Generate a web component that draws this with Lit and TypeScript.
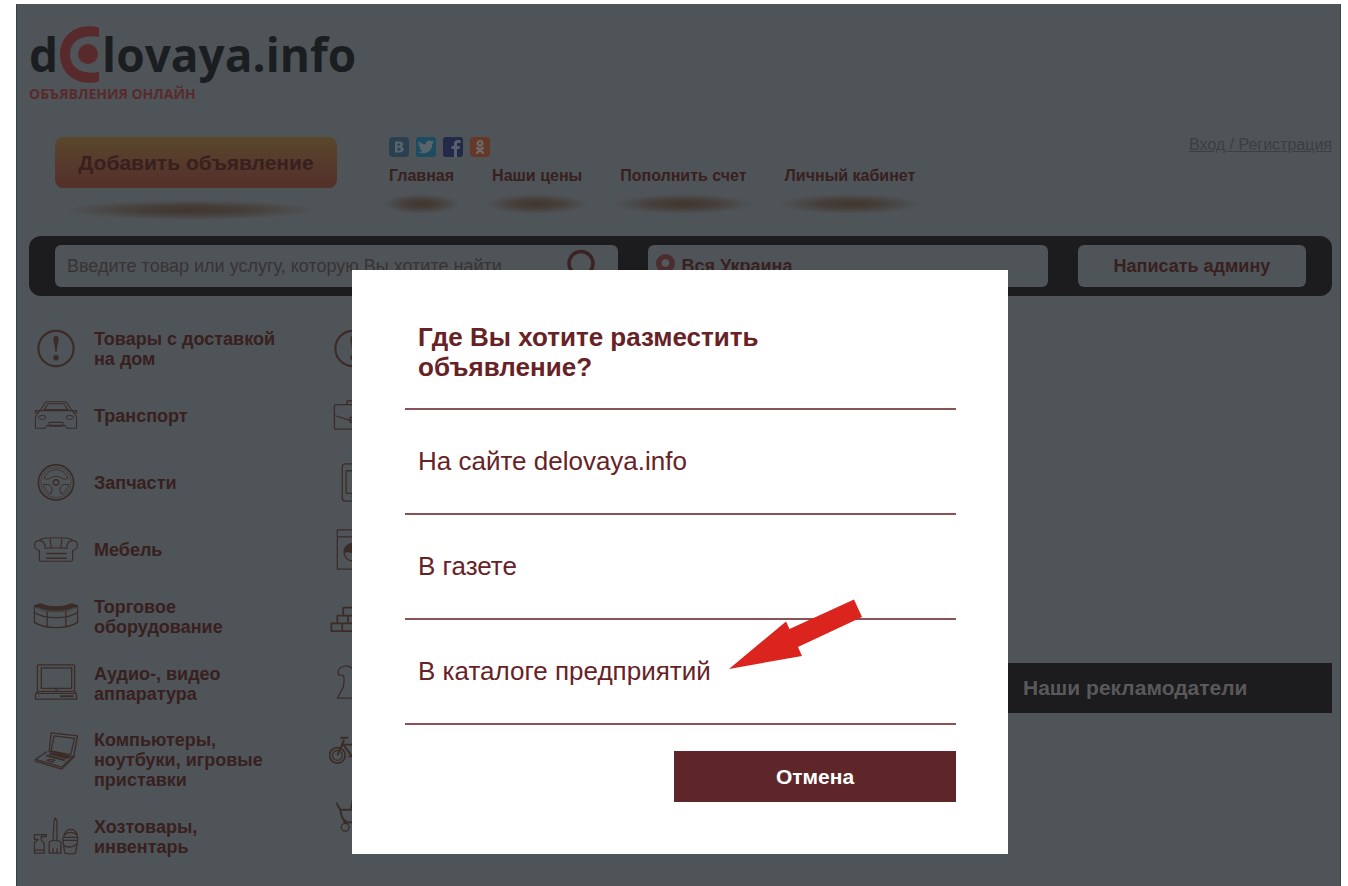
import { LitElement, html, css, svg, nothing } from "lit";
import { customElement, state } from "lit/decorators.js";

const icons: Record<string, unknown> = {
  alert: svg`<circle cx="24" cy="24" r="18" stroke-width="2.2"/><path d="M21.3 13.5c0-3 5.400-3 5.400 0 0 4-1.700 7-2 14h-1.400c-.3-7-2-10-2-14z" fill="currentColor" stroke="none"/><circle cx="24" cy="33.500" r="2.800" fill="currentColor" stroke="none"/>`,
  car: svg`<path d="M8 19l4-7c1-1.500 2-2 4-2h16c2 0 3 .5 4 2l4 7M12 18l3-5c.5-1 1-1 2-1h14c1 0 1.500 0 2 1l3 5zM8 19H3v2l3 1M40 19h5v2l-3 1M8 19h32c3 2 5 5 5 9v9H35l-2-3H15l-2 3H3v-9c0-4 2-7 5-9zM17 31h14v4H17z" stroke-width="1.100"/><ellipse cx="10" cy="26" rx="4" ry="2" stroke-width="1"/><ellipse cx="38" cy="26" rx="4" ry="2" stroke-width="1"/>`,
  wheel: svg`<circle cx="24" cy="24" r="18" stroke-width="1.800"/><circle cx="24" cy="24" r="15.500" stroke-width=".6"/><circle cx="24" cy="24" r="2.800"/><path d="M12 20c3-12 21-12 24 0-3 1-5 .5-7-1-3-2-7-2-10 0-2 1.500-4 2-7 1zM11 26h5c3 1 4 3 4 5l-1 5c-4-2-7-5-8-10zM37 26h-5c-3 1-4 3-4 5l1 5c4-2 7-5 8-10z" stroke-width="1"/>`,
  sofa: svg`<path d="M7 25c-7-2-6-10 0-10 2-3 8-3 17-3s15 0 17 3c6 0 7 8 0 10v9c0 2-1 2-2 2H9c-2 0-2-1-2-2zM7 15c4 0 6 3 6 8 5-1 17-1 22 0 0-5 2-8 6-8M18 13l1 9M30 13l-1 9" stroke-width="1.200"/><path d="M14 28h21M14 33h21" stroke-width="1.600"/>`,
  counter: svg`<path d="M2 13l6-2c8 4 24 4 32 0l6 2c-10 8-34 8-44 0z" fill="currentColor"/><path d="M2 13v17c10 7 34 7 44 0V13M15 18v17M34 18v17M2 20c10 7 34 7 44 0"/><path d="M5 15c10 5 28 5 38 0" stroke="#4f5458" stroke-width=".8"/>`,
  monitor: svg`<rect x="5" y="5" width="38" height="27" rx="1"/><rect x="9" y="8" width="31" height="21"/><path d="M5 32l-2 3v5h42v-5l-2-3M3 34h42"/><path d="M28 37h14" stroke-width="2"/><path d="M6 37h1M23 30.500h3"/>`,
  laptop: svg`<path d="M19 6l27 3-4 22-25-6zM22 9l21 2.500-4 17-20-4z"/><path d="M15 25L3 33l27 8 12-12M3 33v2l27 8 13-13"/><path d="M17 27l19 5M14 29l19 5M21 26l17 5" stroke-width="2"/><path d="M15 34l5 2 3-2-5-1z"/>`,
  household: svg`<path d="M2 22h12v2H9v4l3 3v10H2V30l4-3h-4zM2 38h10M21 28l1-20 1-3 2 3v20M17 31c0-2 2-3 6-3s6 1 6 3v10H17zM21 41v-5M25 41v-5M32 25c0-11 14-11 14 0M31 25h15v3H31zM31 28l2 13c2 1 9 1 11 0l2-13M33 22c3-3 9-3 12 0M32 33c4 3 9 2 13-1"/>`,
  briefcase: svg`<rect x="5" y="13" width="38" height="25" rx="2"/><path d="M18 13v-4h12v4M5 24l16 5h6l16-5M21 26h6v5h-6z"/>`,
  phone: svg`<rect x="13" y="5" width="24" height="38" rx="3"/><path d="M17 12h16v23H17zM22 38h5"/>`,
  washer: svg`<path d="M8 4h32v40H8zM8 11h32"/><circle cx="24" cy="27" r="9"/><path d="M15 27c5-3 12 3 18 0 0-12-18-12-18 0z" fill="currentColor"/>`,
  bricks: svg`<path d="M2 31h44v8H2zM8 23h32v8H8zM14 15h20v8H14zM13 31v8M26 31v8M19 23v8M29 23v8M24 15v8" stroke-width="1.800"/>`,
  chess: svg`<path d="M9 11c2-5 8-6 12-4 7 4 8 16 6 22l5 6v4H8l6-11c1-6 2-9 0-12l-5-1z"/>`,
  bike: svg`<circle cx="8" cy="29" r="8" stroke-width="1.800"/><circle cx="8" cy="29" r="5"/><circle cx="40" cy="29" r="8"/><path d="M8 29l7-16M11 11h8M14 18h18L23 30zM14 18l9 12h-4M31 18l9 11M27 12h8" stroke-width="2"/>`,
  pram: svg`<path d="M7 9l4 7M11 16h22c0 9-5 13-13 13-5 0-8-5-9-13M22 16L24 4M14 27l3 3M28 27l5 5" stroke-width="2"/><circle cx="16" cy="34" r="4"/><circle cx="34" cy="34" r="4"/>`,
};

const categories: { icon: string; label: string }[] = [
  { icon: "alert", label: "Товары с доставкой на дом" },
  { icon: "car", label: "Транспорт" },
  { icon: "wheel", label: "Запчасти" },
  { icon: "sofa", label: "Мебель" },
  { icon: "counter", label: "Торговое оборудование" },
  { icon: "monitor", label: "Аудио-, видео аппаратура" },
  { icon: "laptop", label: "Компьютеры, ноутбуки, игровые приставки" },
  { icon: "household", label: "Хозтовары, инвентарь" },
];

const moreCategories = ["alert", "briefcase", "phone", "washer", "bricks", "chess", "bike", "pram"];

const menu = ["Главная", "Наши цены", "Пополнить счет", "Личный кабинет"];

const places = ["На сайте delovaya.info", "В газете", "В каталоге предприятий"];

@customElement("app-root")
export class AppRoot extends LitElement {
  @state() private open = true;

  static styles = css`
    :host {
      display: block;
      padding: 4px 7px 0 16px;
      background: #fff;
      font-family: "Liberation Sans", Arial, sans-serif;
      color: #38201f;
    }
    * {
      box-sizing: border-box;
    }
    a {
      color: inherit;
      text-decoration: none;
    }
    button,
    input,
    select {
      font: inherit;
      color: inherit;
      border: 0;
      margin: 0;
      background: none;
      outline: none;
    }
    button {
      cursor: pointer;
      padding: 0;
    }
    .page {
      position: relative;
      min-height: calc(100vh - 4px);
      background: #4f5458;
      border-left: 1px solid #2b444d;
      border-right: 1px solid #3e4448;
      padding: 20px 8px 0 12px;
    }
    .logo {
      display: block;
      width: max-content;
      font-family: "Open Sans", "Noto Sans", sans-serif;
      font-weight: 700;
    }
    .wordmark {
      display: flex;
      align-items: center;
      gap: 2px;
      height: 60px;
      font-size: 46px;
      line-height: 60px;
      color: #1b1e20;
    }
    .tagline {
      display: block;
      font-size: 14px;
      line-height: 20px;
      color: #592a2c;
    }
    .header {
      display: flex;
      align-items: flex-start;
      margin-top: 33px;
      padding-left: 26px;
      height: 99px;
    }
    .add {
      width: 282px;
      margin-right: 52px;
    }
    .add-button {
      width: 100%;
      height: 51px;
      border-radius: 8px;
      background: linear-gradient(#59482c, #573a2c 50%, #54302b);
      font-size: 21px;
      font-weight: 700;
    }
    .glow {
      display: block;
      height: 20px;
      background: radial-gradient(closest-side, #41372f, #453d38 40%, transparent);
    }
    .add .glow {
      margin: 12px 20px 0 10px;
    }
    .social {
      display: flex;
      gap: 7px;
      height: 20px;
    }
    .social svg {
      display: block;
    }
    .menu {
      display: flex;
      gap: 38px;
      margin-top: 9px;
      font-size: 16px;
      line-height: 20px;
      font-weight: 700;
    }
    .menu .glow {
      margin: 8px -6px 0;
    }
    .menu a {
      display: block;
    }
    .login {
      margin-left: auto;
      font-size: 16px;
      line-height: 16px;
      color: #3a3f43;
      text-decoration: underline;
    }
    .bar {
      display: grid;
      grid-template-columns: 563fr 399fr 228fr;
      gap: 30px;
      padding: 9px 26px;
      border-radius: 12px;
      background: #1c1b1d;
      font-size: 18px;
    }
    .field {
      display: flex;
      align-items: center;
      height: 42px;
      min-width: 0;
      border-radius: 6px;
      background: #4f5458;
    }
    .field input {
      flex: 1;
      min-width: 0;
      height: 42px;
      padding: 0 0 0 12px;
    }
    .field input::placeholder {
      color: #373335;
      opacity: 1;
    }
    .find {
      padding-right: 20px;
      color: #3a2322;
    }
    .find svg,
    .pin {
      display: block;
    }
    .pin {
      margin: 0 6px 0 8px;
    }
    .field select {
      flex: 1;
      appearance: none;
      font-weight: 700;
      height: 42px;
      padding: 0;
    }
    .write {
      justify-content: center;
      font-weight: 700;
    }
    .content {
      display: grid;
      grid-template-columns: 297px 1fr 324px;
      padding-top: 29px;
    }
    .list {
      display: flex;
      flex-direction: column;
      gap: 20px;
      margin: 0;
      padding: 0 0 24px 3px;
      list-style: none;
    }
    .item {
      display: flex;
      gap: 14px;
      min-height: 47px;
      font-size: 18px;
      line-height: 20px;
      font-weight: 700;
    }
    .item span {
      align-self: center;
      width: 190px;
      padding: 3px 0;
    }
    .icon {
      display: block;
      flex: none;
      color: #3b2c28;
    }
    .partners {
      padding-top: 338px;
    }
    .partners h2 {
      margin: 0;
      padding: 0 15px;
      background: #1c1b1d;
      color: #59585b;
      font-size: 21px;
      line-height: 50px;
    }
    .overlay {
      position: absolute;
      inset: 0;
      display: flex;
      justify-content: center;
      align-items: flex-start;
      padding: 266px 0 0 3px;
    }
    .dialog {
      width: 656px;
      max-width: 100%;
      padding: 52px 52px 52px 53px;
      background: #fff;
      color: #672226;
      font-size: 26px;
      line-height: 30px;
    }
    .dialog h1 {
      margin: 0;
      padding: 0 140px 26px 13px;
      border-bottom: 2px solid #8a5254;
      font-size: inherit;
    }
    .place {
      position: relative;
      display: block;
      width: 100%;
      height: 105px;
      padding: 0 0 2px 13px;
      border-bottom: 2px solid #8a5254;
      text-align: left;
    }
    .arrow {
      position: absolute;
      left: 324px;
      top: -21px;
    }
    .cancel {
      display: block;
      width: 282px;
      height: 51px;
      margin: 26px 0 0 auto;
      background: #5e2628;
      color: #fff;
      font-size: 21px;
      font-weight: 700;
    }
  `;

  private icon(name: string) {
    return html`<svg class="icon" width="48" height="47" viewBox="0 0 48 48" fill="none" stroke="currentColor" stroke-width="1.300" stroke-linejoin="round" aria-hidden="true">${icons[name]}</svg>`;
  }

  private close() {
    this.open = false;
  }

  private renderSocial() {
    return html`<div class="social">
      <a href="#" aria-label="ВКонтакте"><svg width="20" height="20" viewBox="0 0 20 20"><rect width="20" height="20" rx="4" fill="#2a4050"/><path d="M6 4.500h4.500c4.500 0 4.500 4 1.800 5 3.700 1 3.200 6-1.800 6H6zM8.500 6.500v2.200h1.300c2 0 2-2.200 0-2.200zM8.500 10.700v2.800h1.500c2.200 0 2.200-2.800 0-2.800z" fill="#5a646b" fill-rule="evenodd"/></svg></a>
      <a href="#" aria-label="Twitter"><svg width="20" height="20" viewBox="0 0 20 20"><rect width="20" height="20" rx="3" fill="#1c4c62"/><path d="M2.500 4c2 2.300 4.500 3.300 7.300 3.500C9.300 4.500 13 2 15.500 4.300l2.300-.8-1.300 2 1.500-.3-1.700 1.900C16.500 14.500 9 18.500 2 15c2 0 3.500-.3 4.800-1.400C5 13.300 4 12.400 3.600 11h1.500C3.500 10.300 2.500 9 2.500 7.300L4 7.700C2.500 6.500 2 5.500 2.500 4z" fill="#5a646b"/></svg></a>
      <a href="#" aria-label="Facebook"><svg width="20" height="20" viewBox="0 0 20 20"><rect width="20" height="20" rx="3" fill="#232a49"/><path d="M11 20v-8H8.500V9H11V7c0-3 1.500-4 4-4h2.500v3h-2C14 6 14 6.500 14 7.500V9h3l-.5 3H14v8z" fill="#5a606b"/></svg></a>
      <a href="#" aria-label="Одноклассники"><svg width="20" height="20" viewBox="0 0 20 20"><rect x=".5" y=".5" width="19" height="19" rx="3" fill="#633a2a" stroke="#6b3326"/><g fill="none" stroke="#6f6a66" stroke-width="2.200" stroke-linecap="round"><circle cx="10" cy="6.300" r="2.300"/><path d="M7 11c2 1.300 4 1.300 6 0M10 12.500L7 16M10 12.500l3 3.500"/></g></svg></a>
    </div>`;
  }

  private renderDialog() {
    return html`<div class="overlay">
      <section class="dialog" role="dialog" aria-labelledby="question">
        <h1 id="question">Где Вы хотите разместить объявление?</h1>
        ${places.map(
          (place, i) => html`<button class="place" @click=${this.close}>
            ${place}
            ${i === places.length - 1
              ? html`<svg class="arrow" width="134" height="71" viewBox="0 0 134 71" aria-hidden="true"><path d="M0 70L57 22.500 60.500 30 125 .5 133 18 69 48 73 57z" fill="#db241d"/></svg>`
              : nothing}
          </button>`
        )}
        <button class="cancel" @click=${this.close}>Отмена</button>
      </section>
    </div>`;
  }

  render() {
    return html`<div class="page">
      <a class="logo" href="#">
        <span class="wordmark">
          <span>d</span>
          <svg width="40" height="57" viewBox="0 0 40 57" aria-hidden="true"><path d="M39 1.500C16-4 0 10 0 28.500S16 61 39 55.500V46C22 49 10 42 10 28.500S22 8 39 11z" fill="#592a2c"/><circle cx="28" cy="28" r="10" fill="#592a2c"/></svg>
          <span>lovaya.info</span>
        </span>
        <span class="tagline">ОБЪЯВЛЕНИЯ ОНЛАЙН</span>
      </a>

      <header class="header">
        <div class="add">
          <button class="add-button">Добавить объявление</button>
          <span class="glow"></span>
        </div>
        <div>
          ${this.renderSocial()}
          <nav class="menu">
            ${menu.map((entry) => html`<a href="#">${entry}<span class="glow"></span></a>`)}
          </nav>
        </div>
        <a class="login" href="#">Вход / Регистрация</a>
      </header>

      <form class="bar" @submit=${(e: Event) => e.preventDefault()}>
        <div class="field">
          <input type="text" aria-label="Поиск" placeholder="Введите товар или услугу, которую Вы хотите найти" />
          <button class="find" aria-label="Найти"><svg width="32" height="36" viewBox="0 0 32 36" fill="none" stroke="currentColor" stroke-width="3.500" aria-hidden="true"><circle cx="15" cy="15.500" r="12"/><path d="M23 24l7 9"/></svg></button>
        </div>
        <div class="field">
          <svg class="pin" width="19" height="30" viewBox="0 0 19 30" aria-hidden="true"><path d="M9.500 3a9.500 9.500 0 0 1 9.500 9.500c0 6-6 9-9.500 16.500C6 21.500 0 18.500 0 12.500A9.500 9.500 0 0 1 9.500 3z" fill="#4b2d2f"/><circle cx="9.500" cy="12" r="3.800" fill="#555a5e"/></svg>
          <select aria-label="Регион"><option>Вся Украина</option></select>
        </div>
        <button class="field write" type="button">Написать админу</button>
      </form>

      <main class="content">
        <ul class="list">
          ${categories.map(
            (c) => html`<li><a class="item" href="#">${this.icon(c.icon)}<span>${c.label}</span></a></li>`
          )}
        </ul>
        <ul class="list">
          ${moreCategories.map((name) => html`<li><a class="item" href="#">${this.icon(name)}</a></li>`)}
        </ul>
        <aside class="partners"><h2>Наши рекламодатели</h2></aside>
      </main>
      ${this.open ? this.renderDialog() : nothing}
    </div>`;
  }
}
